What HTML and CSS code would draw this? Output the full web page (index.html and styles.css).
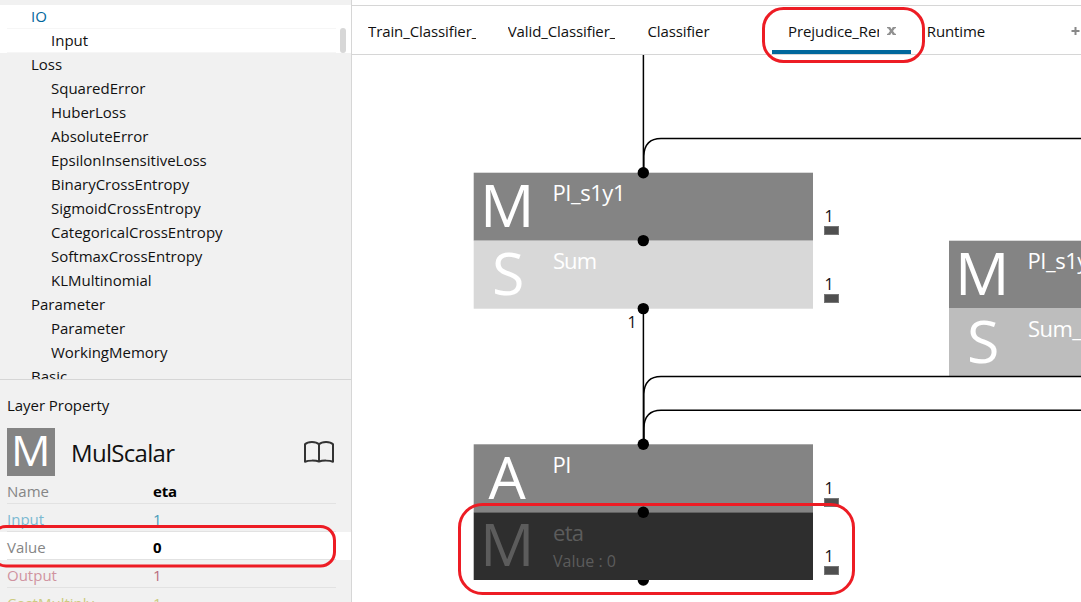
FILE: index.html
```html
<!DOCTYPE html>
<html lang="en">
<head>
<meta charset="utf-8">
<title>Network editor</title>
<link rel="stylesheet" href="styles.css">
</head>
<body>
<div class="app">
  <aside class="sidebar">
    <div class="layers">
      <ul class="list">
        <li class="group current"><span>IO</span></li>
        <li class="item current"><span>Input</span></li>
        <li class="group">Loss</li>
        <li class="item">SquaredError</li>
        <li class="item">HuberLoss</li>
        <li class="item">AbsoluteError</li>
        <li class="item">EpsilonInsensitiveLoss</li>
        <li class="item">BinaryCrossEntropy</li>
        <li class="item">SigmoidCrossEntropy</li>
        <li class="item">CategoricalCrossEntropy</li>
        <li class="item">SoftmaxCrossEntropy</li>
        <li class="item">KLMultinomial</li>
        <li class="group">Parameter</li>
        <li class="item">Parameter</li>
        <li class="item">WorkingMemory</li>
        <li class="group">Basic</li>
      </ul>
      <div class="scrollbar"></div>
    </div>
    <section class="property">
      <h2 class="title">Layer Property</h2>
      <div class="heading">
        <svg class="tile" width="48" height="48" viewBox="0 0 48 48"><rect width="48" height="48"/><text x="4" y="38.3" textLength="39.500" lengthAdjust="spacingAndGlyphs">M</text></svg>
        <span class="name">MulScalar</span>
        <svg class="book" width="32" height="24" viewBox="0 0 32 24"><path d="M16 4.2C13 1.3 5 1.1 2 4.2V21.7C5.5 20.3 12.500 20.300 16 21.500C19.500 20.300 26.500 20.300 30 21.700V4.200C27 1.100 19 1.300 16 4.200V21.500"/></svg>
      </div>
      <div class="row"><span class="key">Name</span><span class="val strong">eta</span></div>
      <div class="row input"><span class="key">Input</span><span class="val">1</span></div>
      <div class="row active"><span class="key">Value</span><span class="val strong">0</span></div>
      <div class="row output"><span class="key">Output</span><span class="val">1</span></div>
      <div class="row cost"><span class="key">CostMultiply</span><span class="val">1</span></div>
    </section>
  </aside>
  <main class="editor">
    <nav class="tabs">
      <div class="tab"><span class="label">Train_Classifier_</span></div>
      <div class="tab"><span class="label">Valid_Classifier_</span></div>
      <div class="tab"><span class="label">Classifier</span></div>
      <div class="tab selected"><span class="label">Prejudice_Remover</span><svg class="close" width="9" height="8" viewBox="0 0 9 8"><path d="M0 0H3.200L4.500 2.200L5.800 0H9V1.300H8L6 4L8 6.700H9V8H5.800L4.500 5.800L3.200 8H0V6.700H1L3 4L1 1.300H0Z"/></svg></div>
      <div class="tab"><span class="label">Runtime</span></div>
      <svg class="add" width="9" height="8" viewBox="0 0 9 8"><path d="M4.500 0V8M.5 4H8.500"/></svg>
    </nav>
    <svg class="graph" width="729" height="547" viewBox="352 55 729 547">
      <circle cx="643.300" cy="580" r="5.700"/>
      <rect class="mid" x="473.700" y="172.700" width="339.300" height="68"/>
      <rect class="light" x="473.700" y="240.700" width="339.300" height="68"/>
      <rect class="mid" x="949" y="240.700" width="140" height="67.300"/>
      <rect class="soft" x="949" y="308" width="140" height="68"/>
      <rect class="mid" x="473.700" y="444.300" width="339.300" height="68"/>
      <rect class="dark" x="473.700" y="512.300" width="339.300" height="67.700"/>
      <g class="wire">
        <path d="M643.400 55V172"/>
        <path d="M643.800 172V156Q644.500 138.600 661 138.600H1081"/>
        <path d="M643.400 308V444"/>
        <path d="M643.800 444V394Q644.500 376.400 661 376.400H1081"/>
        <path d="M643.800 444V428Q644.500 410.200 661 410.200H1081"/>
      </g>
      <circle cx="643.300" cy="172.700" r="5.700"/>
      <circle cx="643.300" cy="240.600" r="5.700"/>
      <circle cx="643.300" cy="308.600" r="5.700"/>
      <circle cx="643.300" cy="444.300" r="5.700"/>
      <circle cx="643.300" cy="512.200" r="5.700"/>
      <g class="letter">
        <text x="480" y="227" textLength="54.500" lengthAdjust="spacingAndGlyphs">M</text>
        <text x="492" y="295">S</text>
        <text x="955" y="295" textLength="54.500" lengthAdjust="spacingAndGlyphs">M</text>
        <text x="967" y="363">S</text>
        <text x="488.500" y="499">A</text>
        <text class="dim" x="480" y="566" textLength="54.500" lengthAdjust="spacingAndGlyphs">M</text>
      </g>
      <g class="caption">
        <text x="552.500" y="201" textLength="73">PI_s1y1</text>
        <text x="553" y="269" textLength="44">Sum</text>
        <text x="1027.500" y="269" textLength="73">PI_s1y2</text>
        <text x="1028" y="337" textLength="54">Sum_</text>
        <text x="552.500" y="473" textLength="19">PI</text>
        <text class="dim" x="553" y="541" textLength="31">eta</text>
        <text class="dim small" x="553" y="567" textLength="63">Value : 0</text>
      </g>
      <g class="count">
        <text x="824.500" y="222">1</text>
        <text x="824.500" y="290">1</text>
        <text x="824.500" y="494">1</text>
        <text x="824.500" y="562">1</text>
        <text x="627.500" y="328">1</text>
      </g>
      <g class="bar">
        <rect x="824.500" y="226.500" width="14" height="8"/>
        <rect x="824.500" y="294.500" width="14" height="8"/>
        <rect x="824.500" y="498.500" width="14" height="8"/>
        <rect x="824.500" y="566.500" width="14" height="8"/>
      </g>
    </svg>
  </main>
  <svg class="marks" width="1081" height="602" viewBox="0 0 1081 602">
    <rect x="763.500" y="8.500" width="160" height="53" rx="20"/>
    <rect x="-8" y="526.500" width="342.500" height="39.500" rx="14"/>
    <rect x="459.500" y="504.500" width="394" height="89" rx="23"/>
  </svg>
</div>
</body>
</html>
```
FILE: styles.css
```css
* { box-sizing: border-box; }
body { margin: 0; background: #fff; color: #111; font: 15px/24px "Open Sans", "Noto Sans", sans-serif; }
.app { position: relative; display: flex; width: 1081px; height: 602px; overflow: hidden; }
.sidebar { display: flex; flex-direction: column; width: 352px; background: #f1f1f1; border-right: 1px solid #d6d6d6; }
.layers { position: relative; flex: none; height: 380px; padding-top: 5px; overflow: hidden; border-bottom: 1px solid #d6d6d6; }
.list { margin: 0; padding: 0; list-style: none; letter-spacing: 0; }
.list li { height: 24px; line-height: 22px; white-space: nowrap; }
.group { padding-left: 31px; }
.item { padding-left: 51px; }
.current { background: linear-gradient(#f6f6f6, #f6f6f6) 7px 23px / 329px 1px no-repeat #fff; }
.group.current { color: #00679c; }
.scrollbar { position: absolute; left: 340px; top: 28px; width: 6px; height: 25px; border-radius: 3px; background: #d7d7d7; }
.property { display: flex; flex-direction: column; padding-top: 14px; }
.title { margin: 0; padding-left: 7px; font-size: 15px; font-weight: 400; line-height: 23px; height: 24px; letter-spacing: -.05px; }
.heading { display: flex; align-items: center; height: 58px; padding: 10px 16px 0 7px; }
.tile { fill: #848484; }
.tile text { fill: #fff; font-size: 42px; }
.name { flex: 1; padding: 2px 0 0 16px; font-size: 24px; letter-spacing: -.7px; }
.book { fill: none; stroke: #333; stroke-width: 2; stroke-linejoin: round; }
.row { display: flex; flex: none; height: 28px; padding: 0 0 0 7px; line-height: 31px; background: linear-gradient(#e2e2e2, #e2e2e2) 7px 27px / 329px 2px no-repeat; }
.key { width: 146px; color: #858585; }
.strong { color: #000; font-weight: 700; letter-spacing: -.2px; }
.row.active { background-color: #fff; }
.input .key { color: #7cb9d1; }
.input .val { color: #499cb9; }
.output .key { color: #d093a0; }
.output .val { color: #b96d7e; }
.cost .key, .cost .val { color: #cccb80; }
.editor { display: flex; flex-direction: column; width: 729px; padding-top: 5px; }
.tabs { display: flex; height: 50px; border: solid #d6d6d6; border-width: 1px 0; }
.tab { display: flex; flex: none; width: 139.7px; padding-left: 16px; line-height: 50px; letter-spacing: -.1px; }
.label { width: 107.500px; overflow: hidden; white-space: nowrap; }
.selected { padding-left: 17px; background: linear-gradient(#00679c, #00679c) 1px 100% / 139px 4px no-repeat; }
.selected .label { width: 91px; }
.close { margin: 21px 0 0 7.500px; fill: #909090; }
.add { margin: 21px 0 0 21px; flex: none; fill: none; stroke: #888; stroke-width: 2; }
.graph { display: block; font-family: "Open Sans", sans-serif; }
.mid { fill: #848484; }
.light { fill: #d8d8d8; }
.soft { fill: #bdbdbd; }
.dark { fill: #2e2e2e; }
.wire { fill: none; stroke: #000; stroke-width: 1.5; }
.letter { fill: #fff; font-size: 59px; }
.caption { fill: #fff; font-size: 22px; }
.caption .small { font-size: 16px; }
.caption .dim, .letter .dim { fill: #5c5c5c; }
.count { fill: #111; font-size: 16px; }
.bar { fill: #505050; stroke: #777; }
.marks { position: absolute; left: 0; top: 0; fill: none; stroke: #ed1c24; stroke-width: 3; pointer-events: none; }
```
